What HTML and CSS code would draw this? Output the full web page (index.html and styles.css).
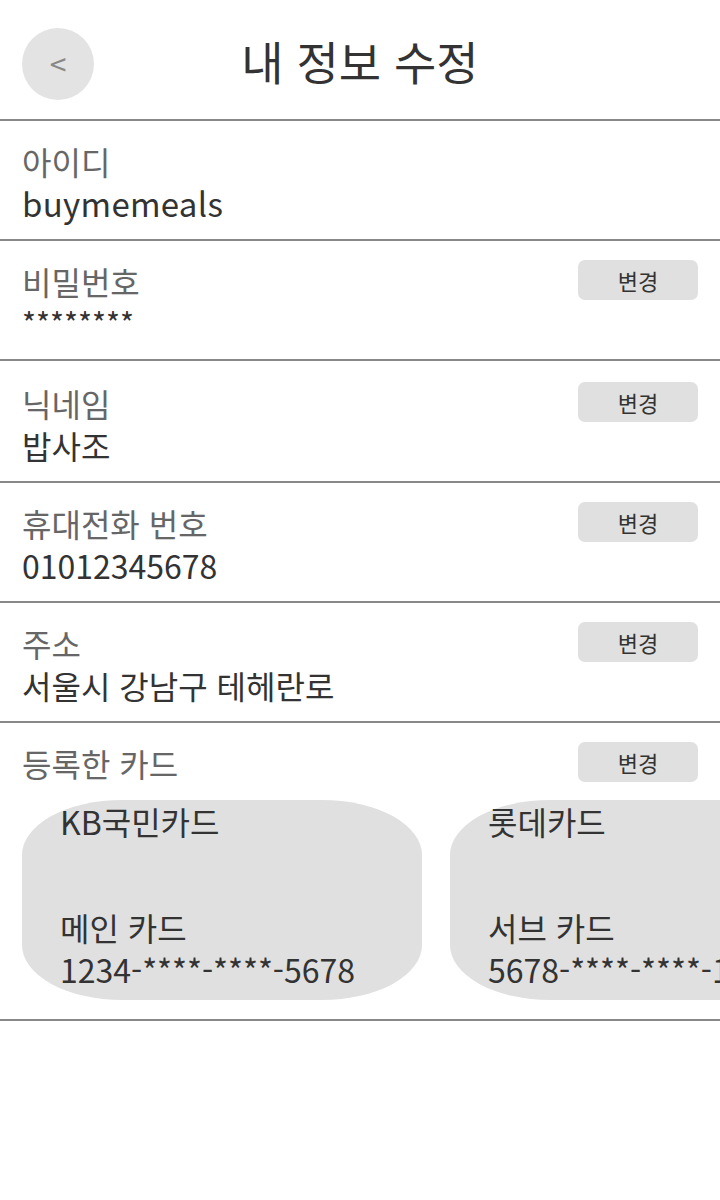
FILE: index.html
```html
<!DOCTYPE html>
<html lang="ko">
<head>
<meta charset="utf-8">
<title>내 정보 수정</title>
<link rel="stylesheet" href="styles.css">
</head>
<body>
<div class="page">
  <header class="header">
    <div class="header-left"><button class="back">&lt;</button></div>
    <h1 class="title">내 정보 수정</h1>
    <div></div>
  </header>

  <section class="row">
    <div class="info">
      <div class="label">아이디</div>
      <div class="value value-id">buymemeals</div>
    </div>
  </section>

  <section class="row">
    <div class="info">
      <div class="label">비밀번호</div>
      <div class="value value-secret">********</div>
    </div>
    <button class="edit">변경</button>
  </section>

  <section class="row row-tall">
    <div class="info">
      <div class="label">닉네임</div>
      <div class="value">밥사조</div>
    </div>
    <button class="edit">변경</button>
  </section>

  <section class="row">
    <div class="info">
      <div class="label">휴대전화 번호</div>
      <div class="value">01012345678</div>
    </div>
    <button class="edit">변경</button>
  </section>

  <section class="row">
    <div class="info">
      <div class="label">주소</div>
      <div class="value">서울시 강남구 테헤란로</div>
    </div>
    <button class="edit">변경</button>
  </section>

  <section class="row row-cards">
    <div class="row-head">
      <div class="label">등록한 카드</div>
      <button class="edit">변경</button>
    </div>
    <div class="cards">
      <div class="card">
        <div class="card-name">KB국민카드</div>
        <div class="card-bottom">
          <div>메인 카드</div>
          <div>1234-****-****-5678</div>
        </div>
      </div>
      <div class="card">
        <div class="card-name">롯데카드</div>
        <div class="card-bottom">
          <div>서브 카드</div>
          <div>5678-****-****-1234</div>
        </div>
      </div>
    </div>
  </section>
</div>
</body>
</html>
```

FILE: styles.css
```css
* { box-sizing: border-box; }

html, body {
  margin: 0;
  padding: 0;
  background: #ffffff;
}

body {
  font-family: "Noto Sans CJK KR", "Noto Sans", sans-serif;
  color: #333333;
  width: 720px;
}

.page {
  width: 720px;
  overflow: hidden;
}

.header {
  height: 121px;
  border-bottom: 2px solid #888888;
  display: grid;
  grid-template-columns: 1fr auto 1fr;
  align-items: center;
}

.header-left {
  padding-left: 22px;
  padding-top: 8px;
  display: flex;
}

.back {
  width: 72px;
  height: 72px;
  border-radius: 50%;
  border: none;
  background: #e3e3e3;
  color: #888888;
  font-family: "Noto Sans CJK KR", sans-serif;
  font-size: 30px;
  line-height: 1;
  padding: 0 0 2px;
  display: flex;
  align-items: center;
  justify-content: center;
}

.title {
  margin: 0;
  padding-top: 0;
  font-size: 46px;
  font-weight: 400;
  color: #333333;
  line-height: 1;
}

.row {
  height: 120px;
  border-bottom: 2px solid #888888;
  padding: 19px 22px 0 22px;
  display: flex;
  justify-content: space-between;
  align-items: flex-start;
}

.row-tall {
  height: 122px;
  padding-top: 21px;
}

.label {
  font-size: 32px;
  line-height: 42px;
  color: #666666;
}

.value {
  font-size: 32px;
  line-height: 42px;
  color: #333333;
}

.value-id {
  font-size: 33px;
  letter-spacing: 0.3px;
}

.value-secret {
  font-size: 30px;
  line-height: 40px;
}

.edit {
  width: 120px;
  height: 40px;
  margin-top: 0;
  border: none;
  border-radius: 7px;
  background: #e0e0e0;
  color: #333333;
  font-family: "Noto Sans CJK KR", sans-serif;
  font-size: 22px;
  line-height: 40px;
  padding: 0;
}

.row-cards {
  height: 298px;
  flex-direction: column;
  justify-content: flex-start;
  align-items: stretch;
  padding-bottom: 19px;
}

.row-head {
  display: flex;
  justify-content: space-between;
  align-items: flex-start;
}

.cards {
  margin-top: 16px;
  display: flex;
  gap: 28px;
  flex-wrap: nowrap;
}

.card {
  flex: 0 0 400px;
  height: 200px;
  background: #e0e0e0;
  border-radius: 100px / 55px;
  padding: 0 0 10px 38px;
  display: flex;
  flex-direction: column;
  justify-content: space-between;
  font-size: 32px;
  line-height: 42px;
  color: #333333;
  white-space: nowrap;
}
```
